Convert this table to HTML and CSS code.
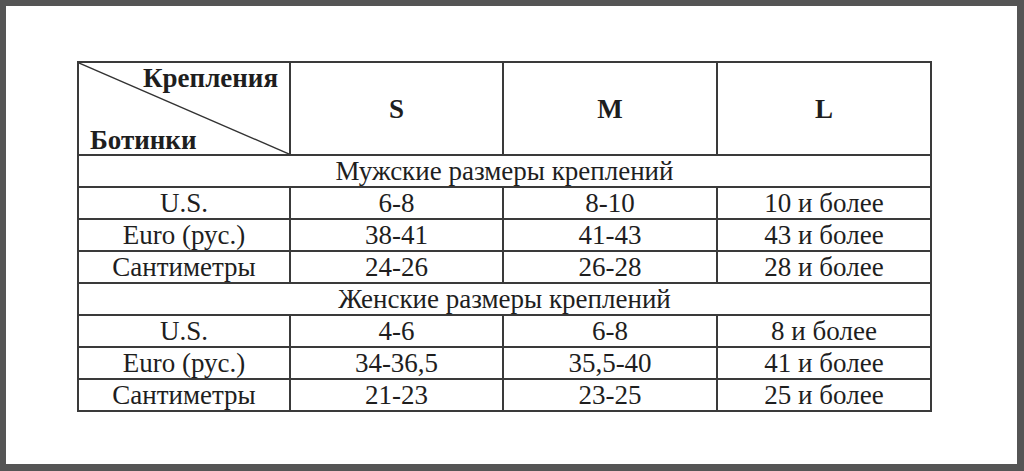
FILE: index.html
```html
<!DOCTYPE html>
<html lang="ru">
<head>
<meta charset="utf-8">
<link rel="stylesheet" href="styles.css">
</head>
<body>
<div class="frame">
  <table class="sizes">
    <colgroup>
      <col class="c1"><col class="c2"><col class="c3"><col class="c4">
    </colgroup>
    <tr class="head">
      <th class="corner">
        <svg class="diag" viewBox="0 0 100 100" preserveAspectRatio="none"><line x1="0" y1="0" x2="100" y2="100" stroke="#333" stroke-width="1.4" vector-effect="non-scaling-stroke"/></svg>
        <span class="top">Крепления</span>
        <span class="bottom">Ботинки</span>
      </th>
      <th>S</th><th>M</th><th>L</th>
    </tr>
    <tr><td colspan="4">Мужские размеры креплений</td></tr>
    <tr><td>U.S.</td><td>6-8</td><td>8-10</td><td>10 и более</td></tr>
    <tr><td>Euro (рус.)</td><td>38-41</td><td>41-43</td><td>43 и более</td></tr>
    <tr><td>Сантиметры</td><td>24-26</td><td>26-28</td><td>28 и более</td></tr>
    <tr><td colspan="4">Женские размеры креплений</td></tr>
    <tr><td>U.S.</td><td>4-6</td><td>6-8</td><td>8 и более</td></tr>
    <tr><td>Euro (рус.)</td><td>34-36,5</td><td>35,5-40</td><td>41 и более</td></tr>
    <tr><td>Сантиметры</td><td>21-23</td><td>23-25</td><td>25 и более</td></tr>
  </table>
</div>
</body>
</html>
```

FILE: styles.css
```css
html, body {
  margin: 0;
  padding: 0;
  background: #555;
}
.frame {
  box-sizing: border-box;
  width: 1024px;
  height: 471px;
  border-style: solid;
  border-color: #555;
  border-width: 6px 7px 7px 6px;
  background: #fff;
  padding: 55px 0 0 71px;
}
.sizes {
  border-collapse: collapse;
  table-layout: fixed;
  width: 854px;
  font-family: "Liberation Serif", "Times New Roman", serif;
  font-size: 27px;
  color: #1e1e1e;
}
.c1 { width: 212px; }
.c2 { width: 213px; }
.c3 { width: 214px; }
.c4 { width: 214px; }
.sizes td, .sizes th {
  border: 2px solid #3a3a3a;
  text-align: center;
  padding: 0;
  height: 30px;
  line-height: 28px;
}
.sizes th {
  font-weight: bold;
  font-size: 27px;
}
.head th {
  height: 91px;
}
.corner {
  position: relative;
}
.diag {
  position: absolute;
  left: 0;
  top: 0;
  width: 100%;
  height: 100%;
}
.corner .top {
  position: absolute;
  right: 11px;
  top: 1px;
}
.corner .bottom {
  position: absolute;
  left: 11px;
  bottom: 0;
}
```
